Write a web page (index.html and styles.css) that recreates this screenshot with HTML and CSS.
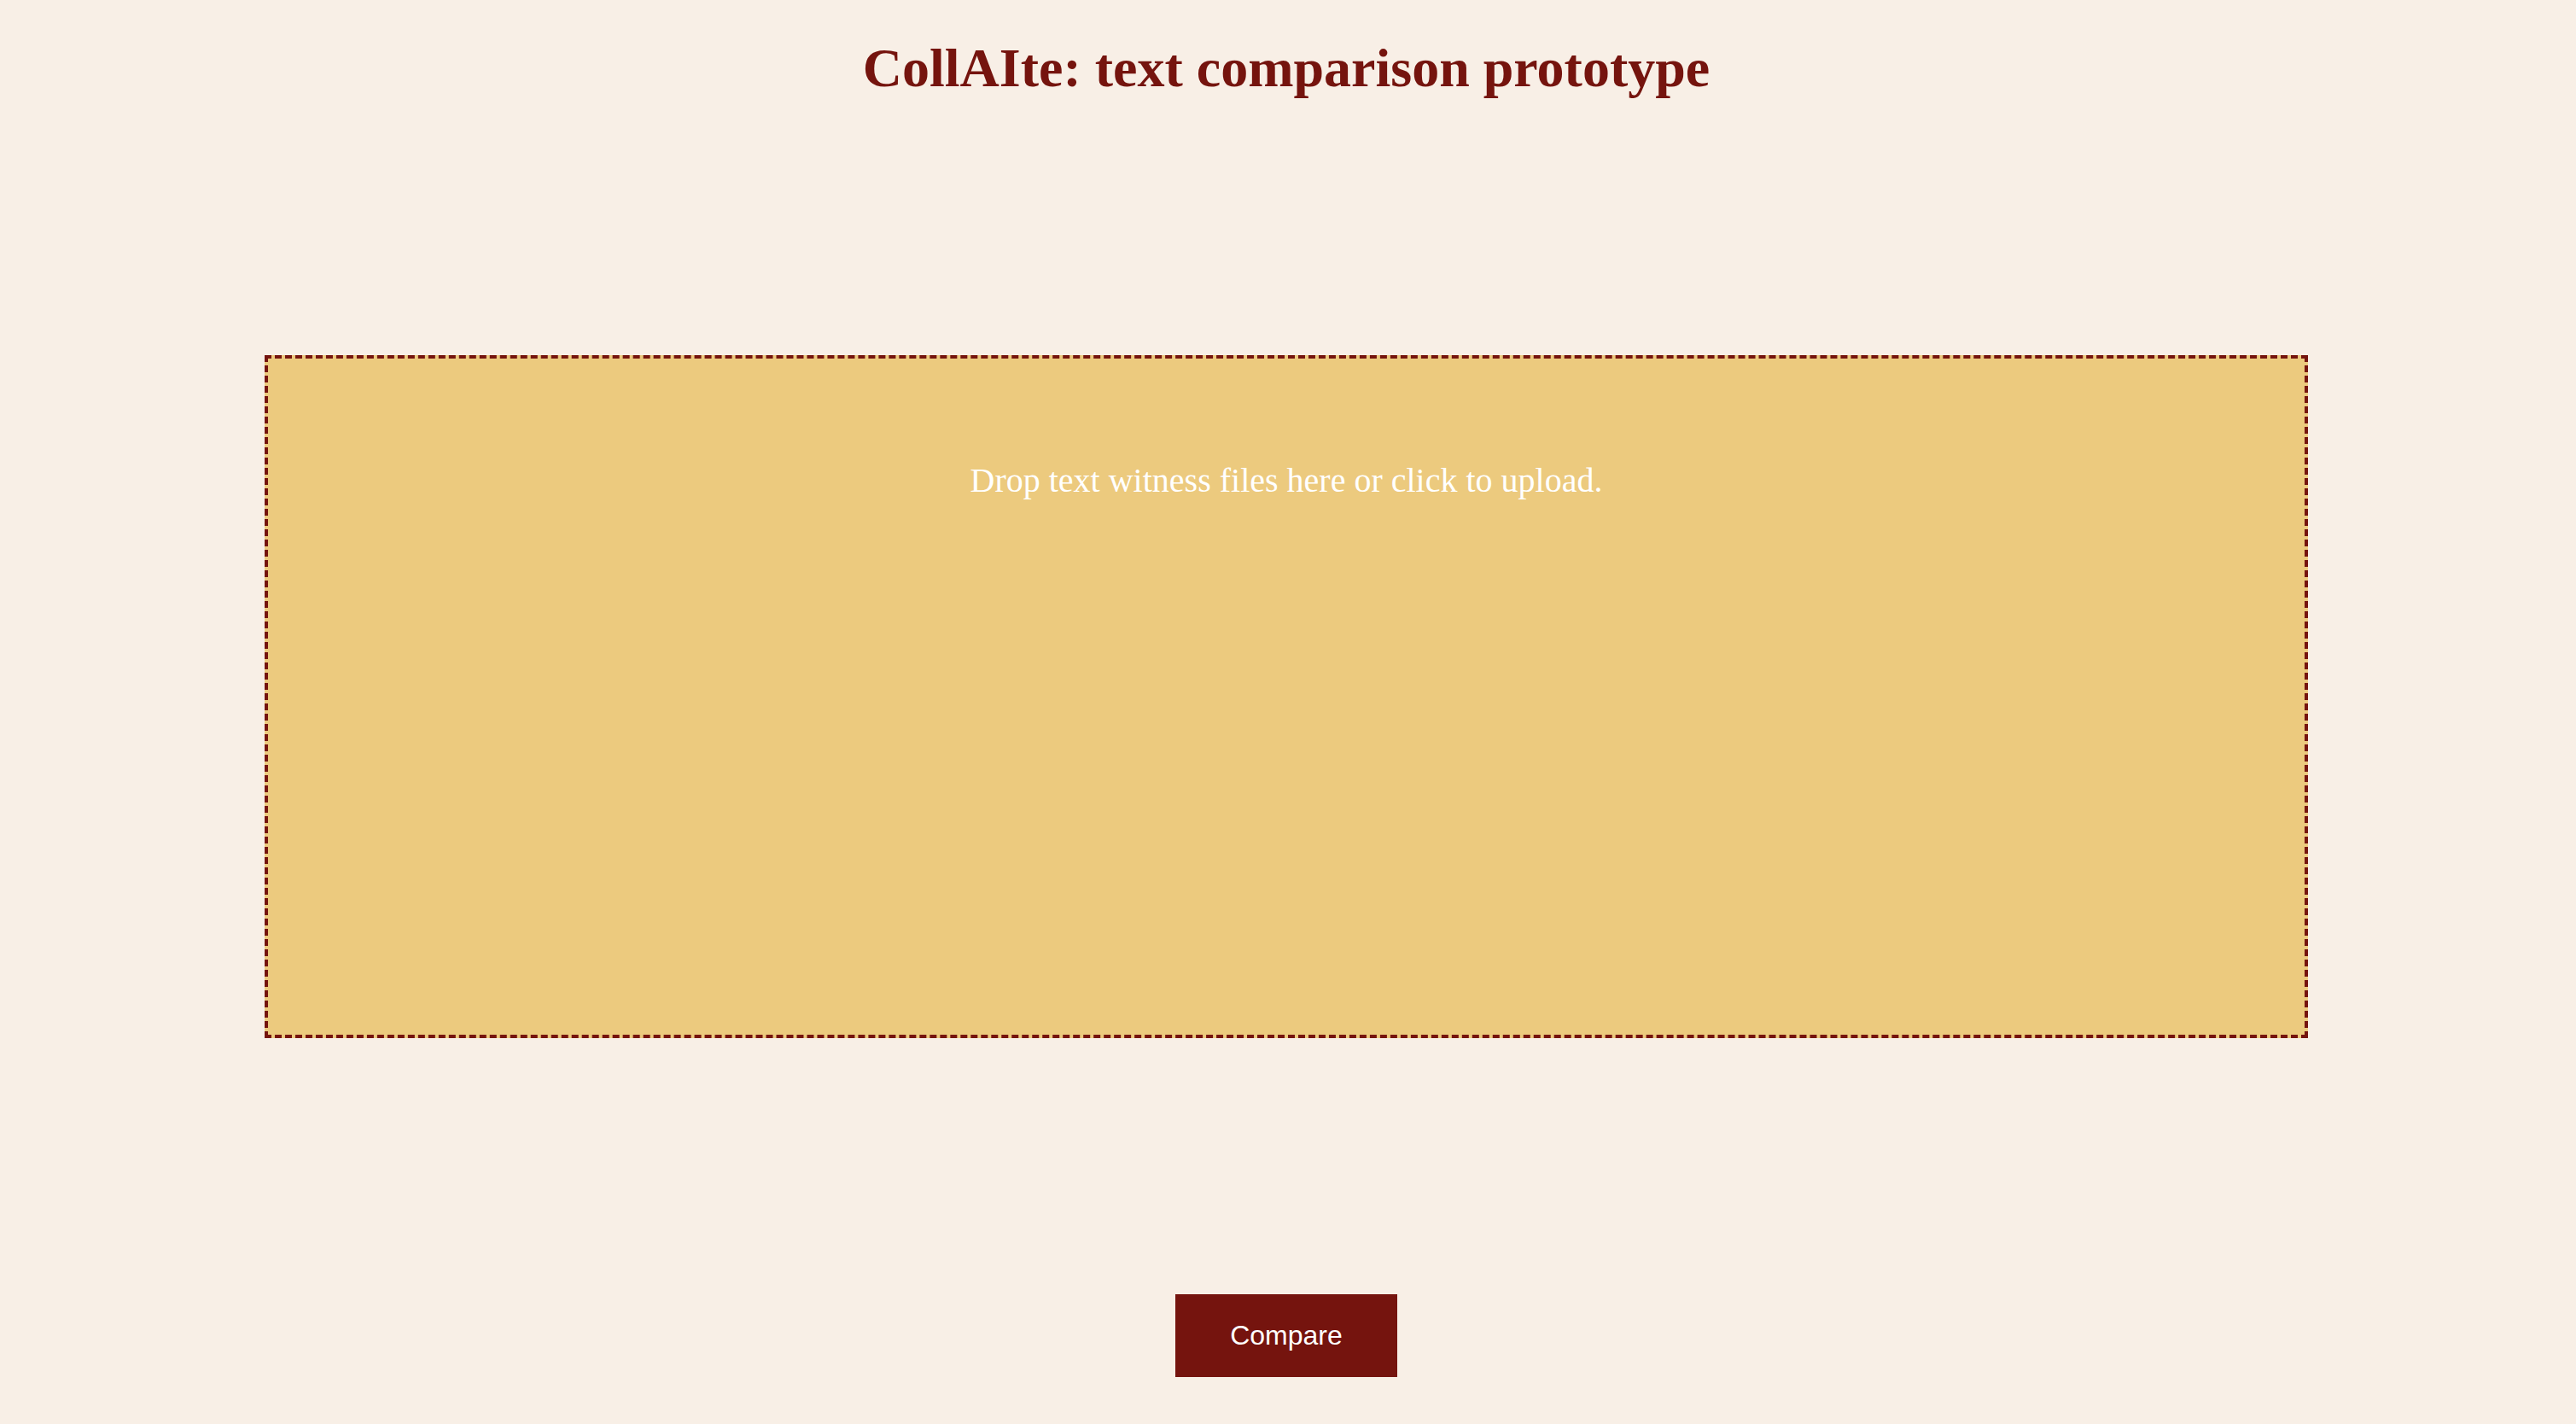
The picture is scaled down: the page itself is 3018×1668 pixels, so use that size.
FILE: index.html
```html
<!DOCTYPE html>
<html lang="en">
<head>
<meta charset="utf-8">
<title>CollAIte</title>
<link rel="stylesheet" href="styles.css">
</head>
<body>
<main class="page">
  <h1 class="title">CollAIte: text comparison prototype</h1>
  <div class="dropzone">
    <p class="drop-text">Drop text witness files here or click to upload.</p>
  </div>
  <button class="compare-btn" type="button">Compare</button>
</main>
</body>
</html>
```
FILE: styles.css
```css
html, body {
  margin: 0;
  padding: 0;
  background: #f8efe6;
}
body {
  font-family: "Liberation Serif", "Times New Roman", serif;
}
.page {
  display: flex;
  flex-direction: column;
  align-items: center;
  padding-right: 4px;
}
.title {
  margin: 43px 0 0;
  font-size: 64px;
  line-height: 74px;
  font-weight: bold;
  color: #75140e;
}
.dropzone {
  box-sizing: border-box;
  margin-top: 299px;
  width: 2394px;
  height: 800px;
  border: 4px dashed #75140e;
  background: #ecca7e;
  padding-top: 120px;
  text-align: center;
  color: #ffffff;
  font-size: 40px;
}
.drop-text {
  margin: 0;
  line-height: 46px;
}
.compare-btn {
  margin-top: 300px;
  width: 260px;
  height: 97px;
  border: none;
  background: #75140e;
  color: #ffffff;
  font-family: "Liberation Sans", Arial, sans-serif;
  font-size: 32px;
  padding: 0;
  cursor: pointer;
}
```
